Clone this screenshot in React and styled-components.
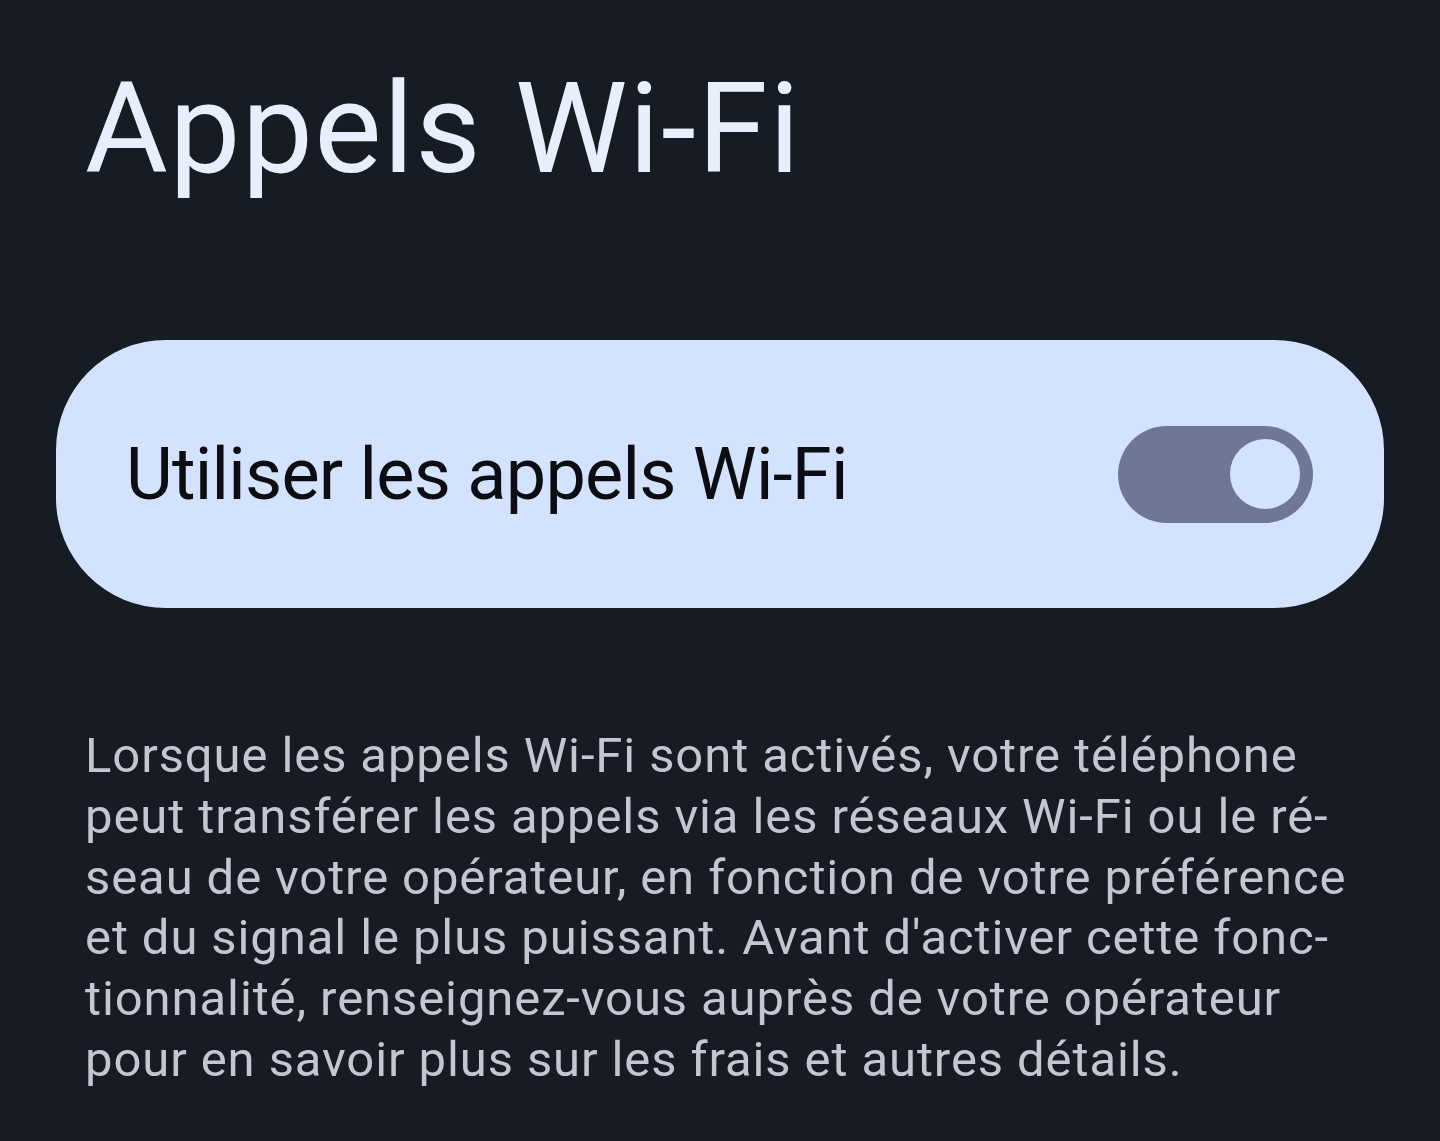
import React from 'react';
import styled, { createGlobalStyle } from 'styled-components';

const GlobalStyle = createGlobalStyle`
  html, body {
    margin: 0;
    padding: 0;
    background: #171c24;
  }
  body {
    font-family: Roboto, "Liberation Sans", sans-serif;
  }
`;

const descriptionLines = [
  'Lorsque les appels Wi-Fi sont activés, votre téléphone',
  'peut transférer les appels via les réseaux Wi-Fi ou le ré-',
  'seau de votre opérateur, en fonction de votre préférence',
  "et du signal le plus puissant. Avant d'activer cette fonc-",
  'tionnalité, renseignez-vous auprès de votre opérateur',
  'pour en savoir plus sur les frais et autres détails.',
];

const App = () => {
  const [enabled, setEnabled] = React.useState(false);
  return (
    <Page>
      <GlobalStyle />
      <Title>Appels Wi-Fi</Title>
      <SwitchCard onClick={() => setEnabled(!enabled)}>
        <CardLabel>Utiliser les appels Wi-Fi</CardLabel>
        <Toggle $on={enabled}>
          <Thumb $on={enabled} />
        </Toggle>
      </SwitchCard>
      <Description>
        {descriptionLines.map((line) => (
          <Line key={line}>{line}</Line>
        ))}
      </Description>
    </Page>
  );
};

const Page = styled.main`
  min-height: 1141px;
  box-sizing: border-box;
  padding: 53px 56px 0 56px;
  display: flex;
  flex-direction: column;
`;

const Title = styled.h1`
  margin: 0 0 135px 29px;
  font-size: 127px;
  line-height: 152px;
  font-weight: 400;
  color: #e8eefb;
  letter-spacing: 1.3px;
`;

const SwitchCard = styled.div`
  height: 268px;
  border-radius: 110px;
  background: #d3e3fd;
  display: flex;
  align-items: center;
  justify-content: space-between;
  padding: 0 71px 0 70px;
  cursor: pointer;
`;

const CardLabel = styled.span`
  font-size: 72px;
  color: #0b0d12;
  letter-spacing: -0.75px;
`;

const Toggle = styled.div`
  width: 195px;
  height: 97px;
  border-radius: 49px;
  background: ${(p) => (p.$on ? '#0b57d0' : '#6e7896')};
  display: flex;
  align-items: center;
  justify-content: flex-end;
  padding: 0 13px;
  box-sizing: border-box;
`;

const Thumb = styled.div`
  width: 70px;
  height: 70px;
  border-radius: 50%;
  background: #d3e3fd;
`;

const Description = styled.p`
  margin: 118px 0 0 29px;
  font-size: 49px;
  line-height: 60.8px;
  color: #c3c7d1;
  letter-spacing: 0.9px;
`;

const Line = styled.span`
  display: block;
  white-space: nowrap;
`;

export default App;
